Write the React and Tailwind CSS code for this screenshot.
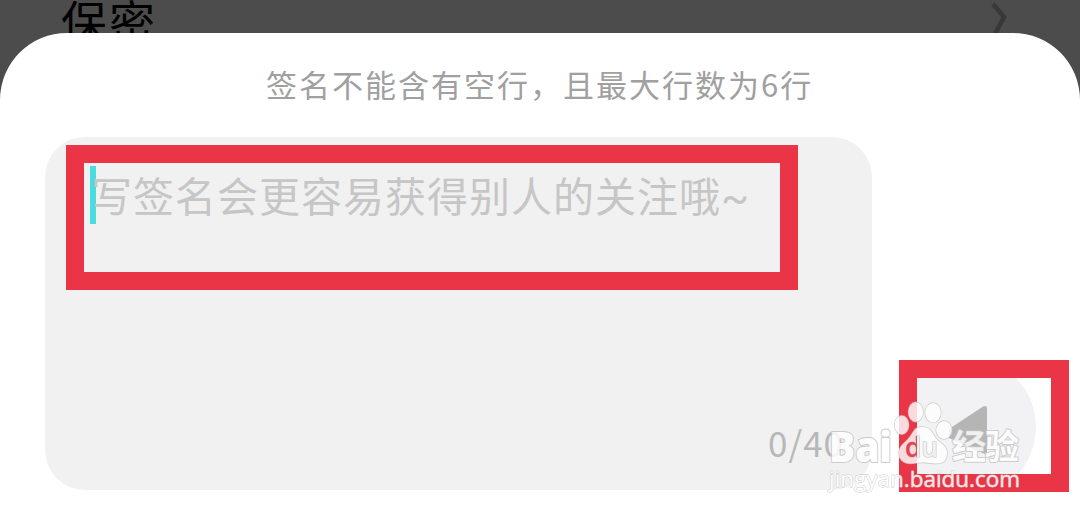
import React from 'react';

const Watermark = () => (
  <svg
    className="absolute left-[820px] top-[395px] w-[210px] h-[100px]"
    viewBox="820 395 210 100"
    fill="#fff"
    stroke="#c4c4c4"
    strokeWidth="1.4"
    strokeLinejoin="round"
    style={{ paintOrder: 'stroke' }}
  >
    <defs>
      {/* The frame shows red through the left part of the logo */}
      <linearGradient id="du" gradientUnits="userSpaceOnUse" x1="905" y1="0" x2="938" y2="0">
        <stop offset="0.36" stopColor="#ea3f50" />
        <stop offset="0.36" stopColor="#f1f1f2" />
      </linearGradient>
    </defs>
    <g opacity="0.82">
      <ellipse cx="901.7" cy="425" rx="7" ry="9.3" />
      <ellipse cx="915.7" cy="412" rx="7.3" ry="9.7" />
      <ellipse cx="933" cy="412.7" rx="7.8" ry="9.7" />
      <ellipse cx="944" cy="430" rx="7.8" ry="9" />
      <path d="M922 427c8 0 10 5 13 10 4 6 12 8 12 16s-4 10.5-10 10.5c-6 0-9-1-14-1s-9 1-13 1c-6 0-11-4-11-10.5 0-8 7-10 11-16s5-10 12-10z" />
    </g>
    <text x="905" y="457" fontSize="27" fontWeight="600" fill="url(#du)" strokeWidth="1.2" textLength="33" lengthAdjust="spacingAndGlyphs" fontFamily="Open Sans, sans-serif">du</text>
    <text x="829" y="461.5" fontSize="43" fontWeight="800" strokeWidth="2" textLength="63" lengthAdjust="spacingAndGlyphs" fontFamily="Open Sans, sans-serif" opacity="0.85">Bai</text>
    <text x="952" y="459" fontSize="34" fontWeight="700" strokeWidth="2" textLength="67" fontFamily="Noto Sans CJK SC, sans-serif" opacity="0.8">经验</text>
    <text x="829" y="487" fontSize="22" fontWeight="500" strokeWidth="0.9" textLength="191" lengthAdjust="spacingAndGlyphs" fontFamily="Open Sans, sans-serif" opacity="0.88">jingyan.baidu.com</text>
  </svg>
);

const App = () => {
  return (
    <div className="relative w-[1080px] h-[517px] bg-[#4c4c4c] overflow-hidden flex flex-col font-['Noto_Sans_CJK_SC',sans-serif]">
      {/* Dimmed row behind the sheet */}
      <div className="h-[33px] shrink-0 overflow-hidden flex justify-between pl-[61px] pr-[72px]">
        <span className="text-[46px] leading-[46px] tracking-[2px] -mt-[4px] text-black">保密</span>
        <svg className="w-[20px] h-[36px]" viewBox="0 0 20 36" fill="none" stroke="#383838" strokeWidth="4.5">
          <path d="M5 4l11 13L7 34" />
        </svg>
      </div>

      {/* Bottom sheet */}
      <div className="flex-1 bg-white rounded-t-[67px] flex flex-col">
        <p className="h-[104px] pt-[28px] pl-[266px] text-[31px] leading-[46px] tracking-[2px] text-[#a0a0a0] whitespace-nowrap">
          签名不能含有空行，且最大行数为6行
        </p>

        <div className="flex pl-[45px] items-start">
          <div className="w-[827px] h-[353px] shrink-0 rounded-[40px] bg-[#f1f1f1] pl-[21px] pt-[8px] flex flex-col justify-between">
            <div className="w-[732px] h-[145px] border-[18px] border-[#ea3546] flex pl-[6px] pt-[3px]">
              <span className="w-[6px] h-[58px] bg-[#4adce0] shrink-0" />
              <span className="-ml-[5px] -mt-[2px] text-[41px] leading-[60px] tracking-[1px] text-[#c6c6c6] whitespace-nowrap">
                写签名会更容易获得别人的关注哦<span className="font-[Roboto]">~</span>
              </span>
            </div>
            <span className="self-end pr-[28px] pb-[26px] text-[35px] leading-[44px] tracking-[1px] text-[#b8b8b8]">0/40</span>
          </div>

          <div className="ml-[27px] mt-[223px] w-[170px] h-[132px] shrink-0 border-[18px] border-[#ea3546] flex">
            <svg className="w-[134px] h-[96px]" viewBox="917 378 134 96">
              <circle cx="966" cy="427" r="70" fill="#f2f2f4" />
              <path d="M949 429L983 406.5Q987 404.5 987 409V455L949 438Z" fill="#b5b5b5" />
            </svg>
          </div>
        </div>
      </div>

      <Watermark />
    </div>
  );
};

export default App;
